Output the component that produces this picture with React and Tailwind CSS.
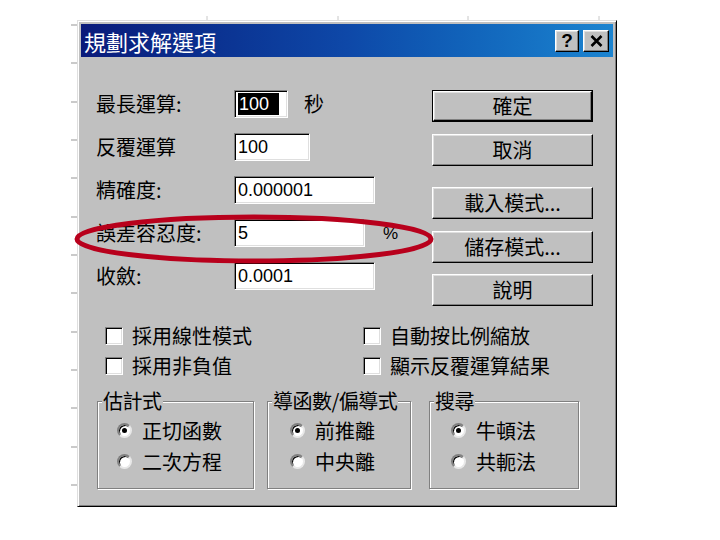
import React from 'react'

const cjk = "font-['Noto_Sans_CJK_TC',sans-serif]"
const latin = "font-['Liberation_Sans','Noto_Sans_CJK_TC',sans-serif]"

const raised = 'border border-t-white border-l-white border-r-black border-b-black shadow-[inset_-1px_-1px_0_#808080,inset_1px_1px_0_#dfdfdf]'
const sunken = 'border border-t-[#808080] border-l-[#808080] border-r-white border-b-white shadow-[inset_1px_1px_0_#000,inset_-1px_-1px_0_#dfdfdf]'

function Field({ width, value, selected, suffix }){
    return (
        <div className="flex items-center">
            <div className={`${sunken} bg-white h-[28px] flex items-center pl-[3px] ${width}`}>
                {selected
                    ? <span className={`${latin} text-[18px] leading-[22px] bg-black text-white pr-[10px] pl-[1px]`}>{value}</span>
                    : <span className={`${latin} text-[18px] leading-[22px] text-black`}>{value}</span>}
            </div>
            {suffix}
        </div>
    )
}

function Row({ label, children }){
    return (
        <div className="h-[43px] flex items-start">
            <div className={`${cjk} w-[138px] text-[20px] leading-[28px] text-black`}>{label}</div>
            {children}
        </div>
    )
}

function Btn({ children, primary, className = '' }){
    const inner = (
        <div className={`${raised} h-full flex items-center justify-center bg-[#c0c0c0] ${cjk} text-[20px] leading-none text-black`}>{children}</div>
    )
    return primary
        ? <div className={`border border-black h-[32px] ${className}`}>{inner}</div>
        : <div className={`h-[32px] ${className}`}>{inner}</div>
}

function Check({ label }){
    return (
        <div className="h-[30px] flex items-center gap-[9px]">
            <div className={`${sunken} bg-white w-[18px] h-[18px] shrink-0`} />
            <span className={`${cjk} text-[20px] leading-none text-black whitespace-nowrap`}>{label}</span>
        </div>
    )
}

function Radio({ label, checked }){
    return (
        <div className="h-[31px] flex items-center gap-[10px]">
            <div className="w-[15px] h-[15px] shrink-0 rounded-full bg-white border-2 border-t-[#808080] border-l-[#808080] border-r-[#e8e8e8] border-b-[#e8e8e8] shadow-[inset_1px_1px_0_#000] flex items-center justify-center">
                {checked && <div className="w-[5px] h-[5px] rounded-full bg-black" />}
            </div>
            <span className={`${cjk} text-[20px] leading-none text-black whitespace-nowrap`}>{label}</span>
        </div>
    )
}

function Group({ title, width, pad, items }){
    return (
        <fieldset className={`${width} shrink-0 h-[100px] border border-[#808080] shadow-[1px_1px_0_#fff,inset_1px_1px_0_#fff] px-0`}>
            <legend className={`${cjk} ml-[4px] px-[1px] bg-[#c0c0c0] text-[20px] leading-[24px] text-black whitespace-nowrap tracking-[-0.5px]`}>{title}</legend>
            <div className={`${pad} pt-[2px]`}>
                {items.map((it, i) => <Radio key={i} label={it} checked={i === 0} />)}
            </div>
        </fieldset>
    )
}

export default function App(){
    const ticks = [25, 63, 102, 140, 178, 217, 255, 293, 332, 370, 408, 447, 485]
    return (
        <div className="relative w-[720px] h-[540px] bg-white overflow-hidden">
            <svg className="absolute left-0 top-0 pointer-events-none" width="720" height="540">
                {[207, 338, 468, 599].map(x => <line key={x} x1={x} y1="16" x2={x} y2="20" stroke="#c8c8c8" />)}
                {ticks.map(y => <line key={y} x1="71" y1={y} x2="77" y2={y} stroke="#b8b8b8" strokeWidth="1.5" />)}
            </svg>

            <div className="relative ml-[77px] mt-[20px] w-[540px] h-[487px] bg-[#c0c0c0] border border-t-[#dfdfdf] border-l-[#dfdfdf] border-r-black border-b-black shadow-[inset_1px_1px_0_#fff,inset_-1px_-1px_0_#808080] p-[3px]">
                <div className="h-[33px] flex items-center justify-between pl-[3px] pr-[4px] bg-gradient-to-r from-[#0a1a7a] via-[#0e48a8] to-[#1c84d0]">
                    <span className={`${cjk} text-white text-[22px] leading-none`}>規劃求解選項</span>
                    <div className="flex gap-[4px]">
                        <div className={`${raised} w-[24px] h-[22px] bg-[#c0c0c0] flex items-center justify-center ${latin} font-bold text-[19px] leading-none text-black`}>?</div>
                        <div className={`${raised} w-[26px] h-[22px] bg-[#c0c0c0] flex items-center justify-center`}>
                            <svg width="13" height="12" viewBox="0 0 13 12">
                                <path d="M1.5 1 L11.5 11 M11.5 1 L1.5 11" stroke="#000" strokeWidth="2.6" />
                            </svg>
                        </div>
                    </div>
                </div>

                <div className="px-[15px] pt-[33px]">
                    <div className="flex">
                        <div className="flex-1">
                            <Row label="最長運算:"><Field width="w-[54px]" value="100" selected suffix={<span className={`${cjk} ml-[16px] text-[20px] leading-none`}>秒</span>} /></Row>
                            <Row label="反覆運算"><Field width="w-[76px]" value="100" /></Row>
                            <Row label="精確度:"><Field width="w-[141px]" value="0.000001" /></Row>
                            <Row label="誤差容忍度:"><Field width="w-[131px]" value="5" suffix={<span className={`${latin} ml-[18px] text-[17px] leading-none`}>%</span>} /></Row>
                            <Row label="收斂:"><Field width="w-[141px]" value="0.0001" /></Row>
                        </div>
                        <div className="w-[161px] mr-[5px] flex flex-col">
                            <Btn primary>確定</Btn>
                            <Btn className="mt-[12px]">取消</Btn>
                            <Btn className="mt-[21px]">載入模式...</Btn>
                            <Btn className="mt-[12px]">儲存模式...</Btn>
                            <Btn className="mt-[11px]">說明</Btn>
                        </div>
                    </div>

                    <div className="grid grid-cols-[258px_1fr] ml-[9px] mt-[15px]">
                        <Check label="採用線性模式" />
                        <Check label="自動按比例縮放" />
                        <Check label="採用非負值" />
                        <Check label="顯示反覆運算結果" />
                    </div>

                    <div className="flex ml-[1px] mt-[8px]">
                        <Group title="估計式" width="w-[157px]" pad="pl-[19px]" items={['正切函數', '二次方程']} />
                        <div className="w-[13px]" />
                        <Group title="導函數/偏導式" width="w-[144px]" pad="pl-[22px]" items={['前推離', '中央離']} />
                        <div className="w-[18px]" />
                        <Group title="搜尋" width="w-[150px]" pad="pl-[21px]" items={['牛頓法', '共軛法']} />
                    </div>
                </div>
            </div>

            <svg className="absolute left-0 top-0 pointer-events-none" width="720" height="540">
                <ellipse cx="254" cy="239" rx="177" ry="22" fill="none" stroke="#b8001c" strokeWidth="5" />
            </svg>
        </div>
    )
}
